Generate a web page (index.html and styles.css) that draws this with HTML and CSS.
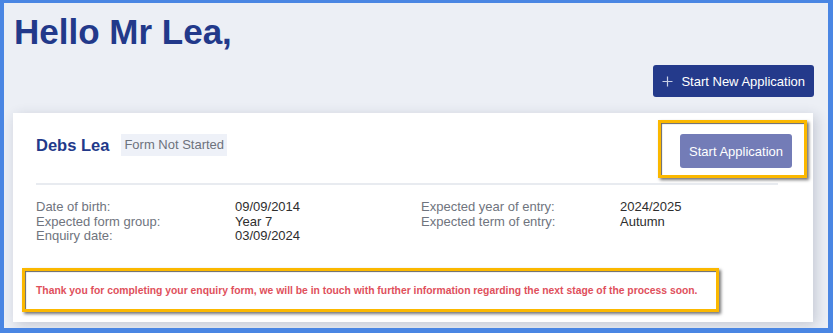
FILE: index.html
```html
<!DOCTYPE html>
<html lang="en">
<head>
    <meta charset="UTF-8">
    <meta name="viewport" content="width=device-width, initial-scale=1.0">
    <title>Applications</title>
    <link rel="stylesheet" href="styles.css">
</head>
<body>
    <div class="frame">
        <h1 class="greeting">Hello Mr Lea,</h1>

        <div class="toolbar">
            <button type="button" class="btn-new">
                <svg class="plus" width="11" height="11" viewBox="0 0 11 11" aria-hidden="true">
                    <path d="M5.5 0.5v10M0.5 5.5h10" stroke="currentColor" stroke-width="1.2" fill="none"/>
                </svg>
                Start New Application
            </button>
        </div>

        <div class="card">
            <div class="card-head">
                <div class="applicant">
                    <span class="name">Debs Lea</span>
                    <span class="status">Form Not Started</span>
                </div>
                <div class="action">
                    <button type="button" class="btn-start">Start Application</button>
                    <span class="annot"></span>
                </div>
            </div>

            <div class="divider"></div>

            <div class="details">
                <span class="label">Date of birth:</span>
                <span class="value">09/09/2014</span>
                <span class="label">Expected year of entry:</span>
                <span class="value">2024/2025</span>

                <span class="label">Expected form group:</span>
                <span class="value">Year 7</span>
                <span class="label">Expected term of entry:</span>
                <span class="value">Autumn</span>

                <span class="label">Enquiry date:</span>
                <span class="value">03/09/2024</span>
            </div>

            <p class="notice">Thank you for completing your enquiry form, we will be in touch with further information regarding the next stage of the process soon.</p>
        </div>
    </div>
</body>
</html>
```

FILE: styles.css
```css
* {
    box-sizing: border-box;
}
body {
    margin: 0;
    font-family: "Liberation Sans", Arial, sans-serif;
    background: #ffffff;
}
.frame {
    width: 833px;
    height: 333px;
    border-style: solid;
    border-color: #4a86e3;
    border-width: 3px 5px 5px 4px;
    background: #eceff5;
    padding: 8px 15px 0 9px;
    overflow: hidden;
}
.greeting {
    margin: 0 0 0 1px;
    font-size: 35px;
    line-height: 41px;
    font-weight: bold;
    color: #22398a;
}
.toolbar {
    display: flex;
    justify-content: flex-end;
    margin-top: 13px;
    margin-right: -1px;
}
.btn-new {
    display: flex;
    align-items: center;
    gap: 8px;
    height: 32px;
    padding: 0 9px;
    background: #243a8b;
    color: white;
    border: none;
    border-radius: 3px;
    font-family: inherit;
    font-size: 13px;
    cursor: pointer;
}
.plus {
    color: #c9d0e6;
}
.card {
    margin-top: 16px;
    width: 800px;
    background: white;
    padding: 21px 21px 10px 23px;
    box-shadow: 3px 3px 12px rgba(40, 50, 80, 0.2);
}
.card-head {
    display: flex;
    justify-content: space-between;
    align-items: flex-start;
}
.applicant {
    display: flex;
    align-items: center;
    gap: 12px;
    height: 22px;
}
.name {
    font-size: 16.5px;
    font-weight: bold;
    color: #22398a;
}
.status {
    background: #eef1f8;
    color: #6d727c;
    font-size: 13px;
    line-height: 22px;
    padding: 0 3px;
}
.action {
    position: relative;
}
.btn-start {
    height: 34px;
    padding: 0 9px;
    background: #737cb7;
    color: white;
    border: none;
    border-radius: 3px;
    font-family: inherit;
    font-size: 13px;
    cursor: pointer;
}
.annot {
    position: absolute;
    top: -14px;
    left: -22px;
    right: -15px;
    bottom: -10px;
    border: 3px solid #fbb800;
    box-shadow: 2px 2px 3px rgba(0, 0, 0, 0.55), inset 1px 1px 1px rgba(0, 0, 0, 0.6);
}
.divider {
    margin: 15px 14px 0 0;
    height: 2px;
    background: #e8ebf0;
}
.details {
    display: grid;
    grid-template-columns: 199px 186px 199px 1fr;
    margin-top: 15px;
    font-size: 13px;
    line-height: 14.5px;
}
.label {
    color: #6f747e;
}
.value {
    color: #2e2e2e;
}
.notice {
    margin: 24px 0 0 -14px;
    width: 697px;
    height: 44px;
    padding: 13px 11px 0;
    border: 3px solid #fbb800;
    box-shadow: 2px 2px 3px rgba(0, 0, 0, 0.55), inset 1px 1px 1px rgba(0, 0, 0, 0.6);
    color: #e0505c;
    font-size: 10.35px;
    font-weight: bold;
    line-height: 14px;
    white-space: nowrap;
}
```
